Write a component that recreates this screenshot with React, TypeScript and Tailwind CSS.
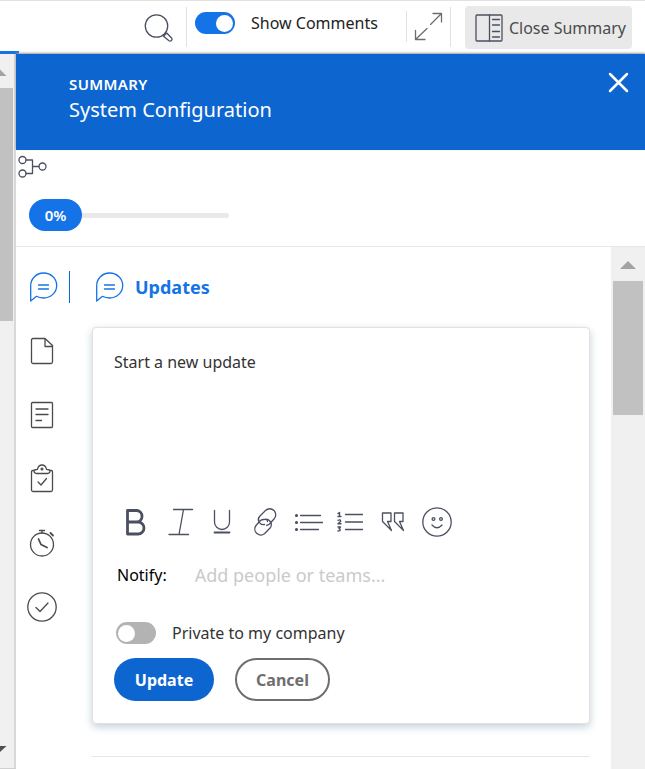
import { ReactNode } from "react";

function Icon({ children, size = 32, className = "" }: { children: ReactNode; size?: number; className?: string }) {
  return (
    <svg
      width={size}
      height={size}
      viewBox={`0 0 ${size} ${size}`}
      fill="none"
      stroke="currentColor"
      strokeWidth={1.3}
      strokeLinecap="round"
      strokeLinejoin="round"
      aria-hidden="true"
      className={`shrink-0 ${className}`}
    >
      {children}
    </svg>
  );
}

const CommentIcon = () => (
  <Icon>
    <path d="M3.700 30V15A13 12.500 0 1 1 16.500 27C14 27 11.500 26.500 9.500 25.300Z" />
    <path d="M11.500 14H21.500M11.500 18H21.500" />
  </Icon>
);

const navItems: { label: string; icon: ReactNode }[] = [
  { label: "Updates", icon: <CommentIcon /> },
  {
    label: "Documents",
    icon: (
      <Icon>
        <path d="M18 3.500H6Q4.500 3.500 4.500 5V27Q4.500 28.500 6 28.500H24Q25.500 28.500 25.500 27V10.500ZM18 3.500V11.500H25.500" />
      </Icon>
    ),
  },
  {
    label: "Details",
    icon: (
      <Icon>
        <rect x="4.500" y="3.500" width="21" height="25" rx="1" />
        <path d="M9 10H21M9 15.500H21M9 21.500H14.500" />
      </Icon>
    ),
  },
  {
    label: "Approvals",
    icon: (
      <Icon>
        <path d="M7 7.500H5.500Q4.500 7.500 4.500 9V27Q4.500 28.500 6 28.500H24Q25.500 28.500 25.500 27V9Q25.500 7.500 24.500 7.500H23M9 10.500Q6 9 7.500 7L10.500 6.300Q11.300 2 15 2Q18.700 2 19.500 6.300L22.500 7Q24 9 21 10.500Z" />
        <circle cx="15" cy="6" r=".9" />
        <path d="M11 19L14 22L19.500 15.500" />
      </Icon>
    ),
  },
  {
    label: "Time",
    icon: (
      <Icon>
        <circle cx="15" cy="17.500" r="11.500" />
        <path d="M12.500 3.500H17.500M15 3.500V6" />
        <path d="M23.500 6L26 8.500M11.500 12L14 17.500L20 20.500" strokeWidth="1.800" />
      </Icon>
    ),
  },
  {
    label: "Complete",
    icon: (
      <Icon>
        <circle cx="15" cy="16" r="14.200" />
        <path d="M9 16.500L13 20.500L21 12" />
      </Icon>
    ),
  },
];

const editorTools: { label: string; icon: ReactNode }[] = [
  {
    label: "Bold",
    icon: (
      <Icon>
        <path d="M7.500 4.500H17A5.800 5.800 0 0 1 17 16H7.500V4.500M7.500 16H18A5.900 5.900 0 0 1 18 28H7.500V16" strokeWidth="2.800" />
      </Icon>
    ),
  },
  {
    label: "Italic",
    icon: (
      <Icon>
        <path d="M10.500 3.500H29.500M6 28.500H25.500M20.500 3.500L16 28.500" />
      </Icon>
    ),
  },
  {
    label: "Underline",
    icon: (
      <Icon>
        <path d="M8.500 4.500V16A7.500 7.500 0 0 0 23.500 16V4.500" />
        <path d="M8.500 26.500H23.500" strokeWidth="1.800" />
      </Icon>
    ),
  },
  {
    label: "Link",
    icon: (
      <Icon>
        <path d="M15.500 18.500A5 5 0 0 1 10.500 10.500L16.500 4.500A6 6 0 0 1 25 13L20.500 18A5.500 5.500 0 0 1 17.500 19.300" />
        <path d="M15 13.500A5.500 5.500 0 0 1 21.500 21.500L15.500 27.800A6 6 0 0 1 7 19.500L11.500 14.500A5.500 5.500 0 0 1 15 13.500Q18.500 13 18.500 15.500" />
      </Icon>
    ),
  },
  {
    label: "Bulleted list",
    icon: (
      <Icon>
        <path d="M8.500 9.500H28.500M8.500 16.500H30.500M8.500 23.500H26.500" />
        <g fill="currentColor">
          <circle cx="4.500" cy="9.500" r=".9" />
          <circle cx="4.500" cy="16.500" r=".9" />
          <circle cx="4.500" cy="23.500" r=".9" />
        </g>
      </Icon>
    ),
  },
  {
    label: "Numbered list",
    icon: (
      <Icon>
        <path d="M10.500 8.500H27.500M10.500 16H27.500M10.500 23.500H27.500" />
        <path d="M3 7.500L4.500 6.500V10.500M3 10.500H6M3 14.300Q6 13 5.500 15.500L3 17.800H6M3 21H5.500L4 22.700Q7 24.500 3 25" strokeWidth="1.400" />
      </Icon>
    ),
  },
  {
    label: "Quote",
    icon: (
      <Icon>
        <path d="M4.500 7H13V15.500H9.500L13.500 24.500L4.500 15.500ZM16.500 7H25V15.500H21.500L25.500 24.500L16.500 15.500Z" />
      </Icon>
    ),
  },
  {
    label: "Emoji",
    icon: (
      <Icon>
        <circle cx="16" cy="16" r="14.200" />
        <circle cx="12.500" cy="13" r="1.400" />
        <circle cx="20" cy="13" r="1.400" />
        <path d="M11 19Q16 24.500 21 19" />
      </Icon>
    ),
  },
];

function Toggle({ label, defaultChecked, className = "" }: { label: string; defaultChecked?: boolean; className?: string }) {
  return (
    <label className={`flex items-center gap-4 whitespace-nowrap text-base leading-6 ${className}`}>
      <input type="checkbox" role="switch" defaultChecked={defaultChecked} className="peer sr-only" />
      <span className="flex h-[22px] w-10 items-center rounded-full bg-[#b3b3b3] p-0.5 peer-checked:justify-end peer-checked:bg-[#1473e6]">
        <span className="size-[17px] rounded-full bg-white" />
      </span>
      {label}
    </label>
  );
}

function Toolbar() {
  return (
    <header className="flex h-[54px] items-start justify-end border-t border-[#e1e1e1] pr-[13px]">
      <button aria-label="Search" className="mt-2.5 mr-3 text-[#4b5060]">
        <Icon>
          <circle cx="14.500" cy="15" r="11.200" />
          <path d="M21.500 25.200L24.700 22L29.800 27.300Q30.500 28.500 29.500 29.500Q28.300 30.500 27 29.800ZM22.500 23.500L23.300 23" />
        </Icon>
      </button>
      <span className="mt-1.5 h-10 w-px bg-[#e1e1e1]" />
      <Toggle label="Show Comments" defaultChecked className="mt-2.5 ml-2 text-[#222222]" />
      <span className="mt-2.5 ml-7 h-[31px] w-px bg-[#e1e1e1]" />
      <button aria-label="Expand" className="mt-2.5 ml-1.5 text-[#6e6e6e]">
        <Icon>
          <path d="M20 2.500H28.500V11M28 3L17.500 13.500M2.500 19.500V28.500H12M3 28L14 17.500" />
        </Icon>
      </button>
      <span className="mt-1.5 ml-[5px] h-10 w-px bg-[#e1e1e1]" />
      <button className="mt-[5px] ml-3.5 flex h-[43px] items-center gap-1 rounded bg-[#e9e9e9] pr-1.5 pl-2 text-base whitespace-nowrap text-[#4b4b4b]">
        <Icon className="text-[#4b5060]">
          <rect x="3" y="3" width="26" height="26" rx="1" />
          <path d="M16.500 3V29M19.500 7.500H26.500M19.500 13H26.500M19.500 19.500H26.500M19.500 25H26.500" />
        </Icon>
        Close Summary
      </button>
    </header>
  );
}

function PageScrollbar() {
  return (
    <div className="-mt-[3px] flex w-4 shrink-0 flex-col border-b border-[#d0d0d0] bg-[#f0f0f0]" aria-hidden="true">
      <div className="h-[3px] w-[19px] shrink-0 bg-[#1473e6]" />
      <div className="flex flex-1 flex-col justify-between border-r-2 border-[#d8d8d8]">
        <div>
          <svg width="7" height="34" viewBox="0 0 7 34" fill="#a3a3a3">
            <path d="M0 15.500L6.500 22H0Z" />
          </svg>
          <div className="h-[233px] w-[13px] bg-[#c1c1c1]" />
        </div>
        <svg width="7" height="22" viewBox="0 0 7 22" fill="#505050">
          <path d="M0 0H6.500L0 6Z" />
        </svg>
      </div>
    </div>
  );
}

function UpdateForm() {
  return (
    <form
      onSubmit={(e) => e.preventDefault()}
      className="rounded-sm border border-[#e1e1e1] bg-white px-[21px] pt-[22px] pb-[22px] shadow-[0_3px_9px_#c5d0da]"
    >
      <textarea
        aria-label="Start a new update"
        placeholder="Start a new update"
        className="block h-[156px] w-full resize-none text-base leading-6 outline-none placeholder:text-[#333333]"
      />
      <div className="flex gap-[11px] pl-1.5 text-[#4b5060]">
        {editorTools.map((tool) => (
          <button key={tool.label} type="button" aria-label={tool.label}>
            {tool.icon}
          </button>
        ))}
      </div>
      <label className="mt-[25px] flex items-center gap-7 pl-[3px] text-base leading-6 text-black">
        Notify:
        <input
          type="text"
          placeholder="Add people or teams..."
          className="min-w-0 flex-1 text-lg leading-6 outline-none placeholder:text-[#cacaca]"
        />
      </label>
      <Toggle label="Private to my company" className="mt-[34px] pl-0.5 text-[#333333]" />
      <div className="mt-[13px] flex gap-[21px] text-base font-bold">
        <button type="submit" className="h-[43px] w-[100px] rounded-full bg-[#0d66d0] text-white">
          Update
        </button>
        <button type="button" className="h-[43px] w-[95px] rounded-full border-2 border-[#6e6e6e] text-[#6e6e6e]">
          Cancel
        </button>
      </div>
    </form>
  );
}

function SummaryPanel() {
  return (
    <section className="flex min-w-0 flex-1 flex-col">
      <div className="flex h-24 items-start justify-between bg-[#0d66d0] pr-[11px] pl-[53px] text-white shadow-[0_-1px_2px_#999999]">
        <div className="pt-5">
          <p className="text-[15px] leading-5 font-semibold tracking-wide">SUMMARY</p>
          <h1 className="text-xl leading-8">System Configuration</h1>
        </div>
        <button aria-label="Close" className="mt-3">
          <Icon>
            <path d="M8 8L25 25M25 8L8 25" strokeWidth="2.500" />
          </Icon>
        </button>
      </div>
      <div className="h-[97px] border-b border-[#e6e6e6]">
        <Icon className="-mt-px text-[#4b5060]">
          <circle cx="6.500" cy="11" r="3.500" />
          <circle cx="6.500" cy="24.500" r="3.500" />
          <circle cx="26.500" cy="17.500" r="3.500" />
          <path d="M10 11H16.500V24.500H10M16.500 17.500H23" />
        </Icon>
        <div className="ml-[13px] mt-[18px] flex items-center">
          <span className="flex h-8 w-[53px] items-center justify-center rounded-full bg-[#1473e6] text-[15px] font-semibold text-white">0%</span>
          <div role="progressbar" aria-valuenow={0} aria-valuemin={0} aria-valuemax={100} aria-label="Percent complete" className="h-[5px] w-[147px] rounded-r-full bg-[#e9e9e9]" />
        </div>
      </div>
      <div className="flex flex-1">
        <nav className="flex w-[76px] shrink-0 flex-col gap-8 pt-6 pl-[11px] text-[#4b4b4b]">
          {navItems.map((item, i) => (
            <a
              key={item.label}
              href="#"
              aria-label={item.label}
              className={i === 0 ? "w-[43px] border-r border-[#0d66d0] text-[#1473e6]" : "w-[43px]"}
            >
              {item.icon}
            </a>
          ))}
        </nav>
        <main className="min-w-0 flex-1 pt-6 pr-[21px]">
          <h2 className="mb-6 flex items-center gap-2.5 pl-px text-lg leading-8 font-bold text-[#1473e6]">
            <CommentIcon />
            Updates
          </h2>
          <UpdateForm />
          <hr className="mt-8 border-[#e6e6e6]" />
        </main>
        <div className="flex w-[34px] shrink-0 flex-col items-center bg-[#f0f0f0]" aria-hidden="true">
          <svg width="16" height="34" viewBox="0 0 16 34" fill="#a3a3a3">
            <path d="M8 14L16 22H0Z" />
          </svg>
          <div className="h-[134px] w-[30px] bg-[#c1c1c1]" />
        </div>
      </div>
    </section>
  );
}

export default function App() {
  return (
    <div className="flex min-h-screen flex-col bg-white font-['Noto_Sans',sans-serif]">
      <Toolbar />
      <div className="flex flex-1">
        <PageScrollbar />
        <SummaryPanel />
      </div>
    </div>
  );
}
